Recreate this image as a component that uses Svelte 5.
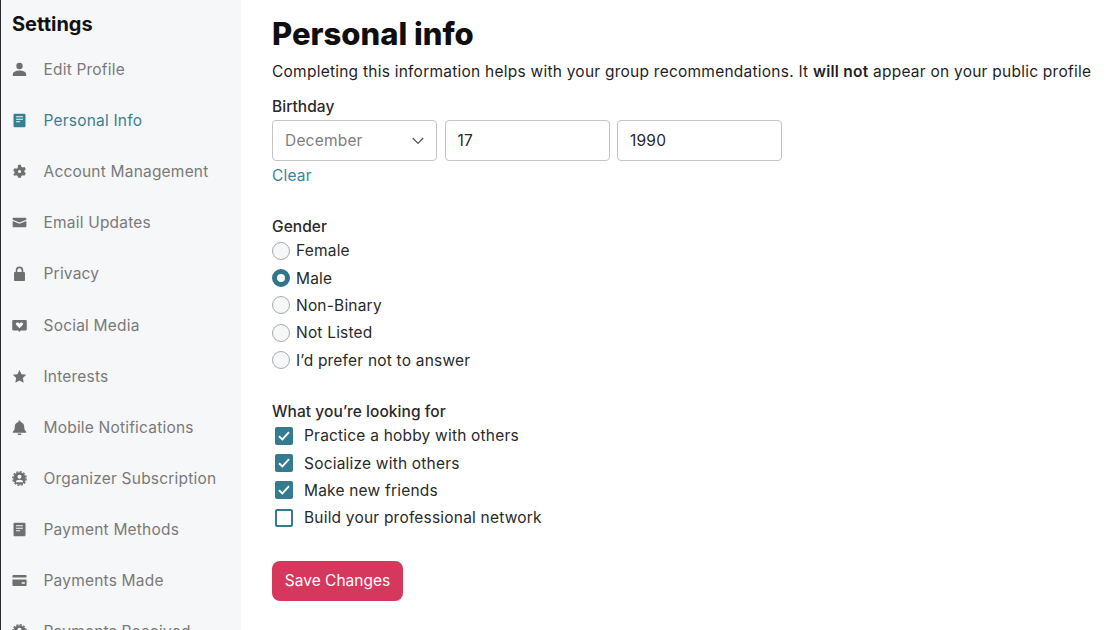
<script>
  const nav = [
    { label: 'Edit Profile', icon: 'user' },
    { label: 'Personal Info', icon: 'doc', active: true },
    { label: 'Account Management', icon: 'gear' },
    { label: 'Email Updates', icon: 'mail' },
    { label: 'Privacy', icon: 'lock' },
    { label: 'Social Media', icon: 'heart' },
    { label: 'Interests', icon: 'star' },
    { label: 'Mobile Notifications', icon: 'bell' },
    { label: 'Organizer Subscription', icon: 'badge' },
    { label: 'Payment Methods', icon: 'doc' },
    { label: 'Payments Made', icon: 'card' },
    { label: 'Payments Received', icon: 'badge' }
  ];
  const genders = ['Female', 'Male', 'Non-Binary', 'Not Listed', 'I’d prefer not to answer'];
  const goals = [
    { label: 'Practice a hobby with others', on: true },
    { label: 'Socialize with others', on: true },
    { label: 'Make new friends', on: true },
    { label: 'Build your professional network', on: false }
  ];
</script>

<div class="page">
  <aside class="sidebar">
    <h2>Settings</h2>
    <nav>
      {#each nav as item}
        <div class="nav-item" class:active={item.active}>
          <svg viewBox="0 0 14 14" width="15" height="15" fill="currentColor">
            {#if item.icon === 'user'}
              <circle cx="7" cy="3.800" r="3" />
              <path d="M.8 13v-1.600C.8 9.200 4 8 7 8s6.200 1.200 6.200 3.400V13z" />
            {:else if item.icon === 'doc'}
              <path fill-rule="evenodd" d="M2.600 .6h8.800c.7 0 1.200.5 1.200 1.200v10.400c0 .7-.5 1.200-1.200 1.200H2.600c-.7 0-1.200-.5-1.200-1.200V1.800c0-.7.5-1.200 1.200-1.200zM3.800 3v1h6.400V3zM3.800 5.300v1h6.400v-1zM3.800 7.600v1h3.800v-1z" />
            {:else if item.icon === 'gear'}
              <path fill-rule="evenodd" d="M5.700 .8h2.600l.4 1.700 1.200.7 1.700-.5 1.300 2.200-1.300 1.200v1.400l1.300 1.200-1.300 2.200-1.700-.5-1.200.7-.4 1.700H5.700l-.4-1.700-1.200-.7-1.700.5L1.100 9.900l1.300-1.200V7.300L1.100 6.100l1.300-2.200 1.700.5 1.200-.7zM7 5.500a1.500 1.500 0 1 0 0 3 1.500 1.500 0 0 0 0-3z" />
            {:else if item.icon === 'mail'}
              <path d="M1.500 2.500h11c.5 0 .9.400.9.900v1L7 6.900.6 4.400v-1c0-.5.400-.9.900-.9z" />
              <path d="M.6 5.600 7 8.100l6.400-2.500v5c0 .5-.4.900-.9.900h-11c-.5 0-.9-.4-.9-.9z" />
            {:else if item.icon === 'lock'}
              <path fill-rule="evenodd" d="M3.500 5.500V4a3.500 3.500 0 0 1 7 0v1.500h.6c.6 0 1 .4 1 1V13c0 .6-.4 1-1 1H2.900c-.6 0-1-.4-1-1V6.500c0-.6.4-1 1-1zM5 5.500h4V4a2 2 0 0 0-4 0z" />
            {:else if item.icon === 'heart'}
              <path fill-rule="evenodd" d="M1.200 1.800h11.600c.6 0 1 .4 1 1v7.800c0 .6-.4 1-1 1H8.200L7 13l-1.200-1.400H1.200c-.6 0-1-.4-1-1V2.800c0-.6.400-1 1-1zM7 9.600l3-3c.9-1.100 0-2.500-1.200-2.400-.8 0-1.400.5-1.800 1.100-.4-.6-1-1.100-1.800-1.100C3.900 4.100 3 5.500 4 6.600z" />
            {:else if item.icon === 'star'}
              <path d="m7 .9 1.900 4 4.400.5-3.200 3 .8 4.400L7 10.700l-3.900 2.100.8-4.400-3.200-3 4.400-.5z" />
            {:else if item.icon === 'bell'}
              <path d="M7 .5c.6 0 1 .4 1 1v.4c2.200.5 3.400 2.200 3.400 4.400 0 2.300.5 3.300 1.900 4.700v.9H.7v-.9c1.400-1.400 1.900-2.400 1.900-4.700 0-2.200 1.200-3.900 3.400-4.400v-.4c0-.6.400-1 1-1z" />
              <path d="M5.200 12.500h3.600a1.800 1.800 0 0 1-3.600 0z" />
            {:else if item.icon === 'badge'}
              <circle cx="7" cy="7" r="6.300" fill="none" stroke="currentColor" stroke-width="1.200" stroke-dasharray="2 1.300" />
              <path fill-rule="evenodd" d="M7 1.200a5.800 5.800 0 1 1 0 11.600A5.800 5.800 0 0 1 7 1.200zm0 2.300a1.900 1.900 0 1 0 0 3.800 1.900 1.900 0 0 0 0-3.800zm0 4.700c-1.700 0-3.300.7-3.300 1.700v.6h6.600v-.6c0-1-1.600-1.700-3.300-1.700z" />
            {:else if item.icon === 'card'}
              <path d="M1.500 1.800h11c.7 0 1.100.4 1.100 1.100v1.400H.4V2.900c0-.7.400-1.100 1.100-1.100z" />
              <path fill-rule="evenodd" d="M.4 6h13.200v5.100c0 .7-.4 1.100-1.100 1.100h-11c-.7 0-1.100-.4-1.100-1.100zm8.600 2.700v1.300h3V8.700z" />
            {/if}
          </svg>
          <span>{item.label}</span>
        </div>
      {/each}
    </nav>
  </aside>

  <main>
    <h1>Personal info</h1>
    <p class="intro">Completing this information helps with your group recommendations. It <b>will not</b> appear on your public profile</p>

    <section class="birthday">
      <div class="label">Birthday</div>
      <div class="fields">
        <div class="field month">
          <span>December</span>
          <svg viewBox="0 0 12 8" width="12" height="8" fill="none" stroke="#555" stroke-width="1.300"><path d="m.8 1 5.200 5.400L11.200 1" /></svg>
        </div>
        <div class="field">17</div>
        <div class="field">1990</div>
      </div>
      <div class="clear">Clear</div>
    </section>

    <section class="gender">
      <div class="label">Gender</div>
      {#each genders as g}
        <div class="radio-row">
          <span class="radio" class:on={g === 'Male'}></span>
          <span>{g}</span>
        </div>
      {/each}
    </section>

    <section class="goals">
      <div class="label">What you’re looking for</div>
      {#each goals as goal}
        <div class="check-row">
          <span class="check" class:on={goal.on}>
            {#if goal.on}
              <svg viewBox="0 0 12 10" width="12" height="10" fill="none" stroke="#fff" stroke-width="1.900"><path d="m1 5.200 3.400 3.200L11 1.200" /></svg>
            {/if}
          </span>
          <span>{goal.label}</span>
        </div>
      {/each}
    </section>

    <button class="save">Save Changes</button>
  </main>
</div>

<style>
  :global(body) {
    margin: 0;
    background: #fff;
  }
  .page {
    display: flex;
    width: 1109px;
    height: 630px;
    overflow: hidden;
    font-family: Inter, "Liberation Sans", sans-serif;
    color: #2a2a2a;
    font-size: 15.5px;
    letter-spacing: 0.2px;
  }
  .sidebar {
    box-sizing: border-box;
    width: 241px;
    flex: none;
    background: #f6f7f8;
    border-left: 1px solid #2a2a2a;
    padding: 12px 0 0 11px;
  }
  h2 {
    margin: 0 0 8px;
    font-size: 20px;
    line-height: 24px;
    font-weight: 700;
    color: #111;
    letter-spacing: 0;
  }
  nav {
    display: flex;
    flex-direction: column;
  }
  .nav-item {
    display: flex;
    align-items: center;
    gap: 16.5px;
    height: 51.1px;
    flex: none;
    color: #7a7a7a;
  }
  .nav-item svg {
    color: #6f6f6f;
    flex: none;
  }
  .nav-item.active,
  .nav-item.active svg {
    color: #3a7f91;
  }
  main {
    padding: 14px 0 0 31px;
    flex: 1;
    min-width: 0;
  }
  h1 {
    margin: 0;
    font-size: 31px;
    line-height: 40px;
    font-weight: 800;
    color: #0f0f0f;
    letter-spacing: 0;
  }
  .intro {
    margin: 8px 0 0;
    line-height: 20px;
    letter-spacing: 0.24px;
    white-space: nowrap;
    color: #1f1f1f;
  }
  .intro b {
    font-weight: 600;
  }
  .label {
    font-weight: 500;
    line-height: 20px;
    letter-spacing: 0.05px;
  }
  .birthday {
    margin-top: 15px;
  }
  .fields {
    display: flex;
    gap: 7.5px;
    margin-top: 3px;
  }
  .field {
    box-sizing: border-box;
    width: 165px;
    height: 41px;
    border: 1px solid #c4c4c4;
    border-radius: 4px;
    padding: 0 12px;
    display: flex;
    align-items: center;
    justify-content: space-between;
  }
  .month {
    color: #808080;
  }
  .clear {
    margin-top: 5px;
    color: #3a8596;
    line-height: 20px;
  }
  .gender {
    margin-top: 31px;
  }
  .radio-row {
    display: flex;
    align-items: center;
    gap: 6px;
    height: 27.4px;
  }
  .radio {
    box-sizing: border-box;
    width: 18px;
    height: 18px;
    border-radius: 50%;
    border: 1.5px solid #aaa;
    background: #f6f7f8;
  }
  .radio.on {
    border: 5px solid #2f7689;
    background: #fff;
  }
  .goals {
    margin-top: 28px;
  }
  .check-row {
    display: flex;
    align-items: center;
    gap: 11px;
    height: 27.4px;
    padding-left: 3px;
  }
  .check {
    box-sizing: border-box;
    width: 18px;
    height: 18px;
    border-radius: 2px;
    border: 2px solid #347b8f;
    display: flex;
    align-items: center;
    justify-content: center;
  }
  .check.on {
    background: #347b8f;
  }
  .save {
    display: block;
    margin-top: 29px;
    width: 131px;
    height: 40px;
    border: none;
    border-radius: 8px;
    background: #d5385c;
    color: #fff;
    font: inherit;
    letter-spacing: 0;
    padding: 0;
  }
</style>
